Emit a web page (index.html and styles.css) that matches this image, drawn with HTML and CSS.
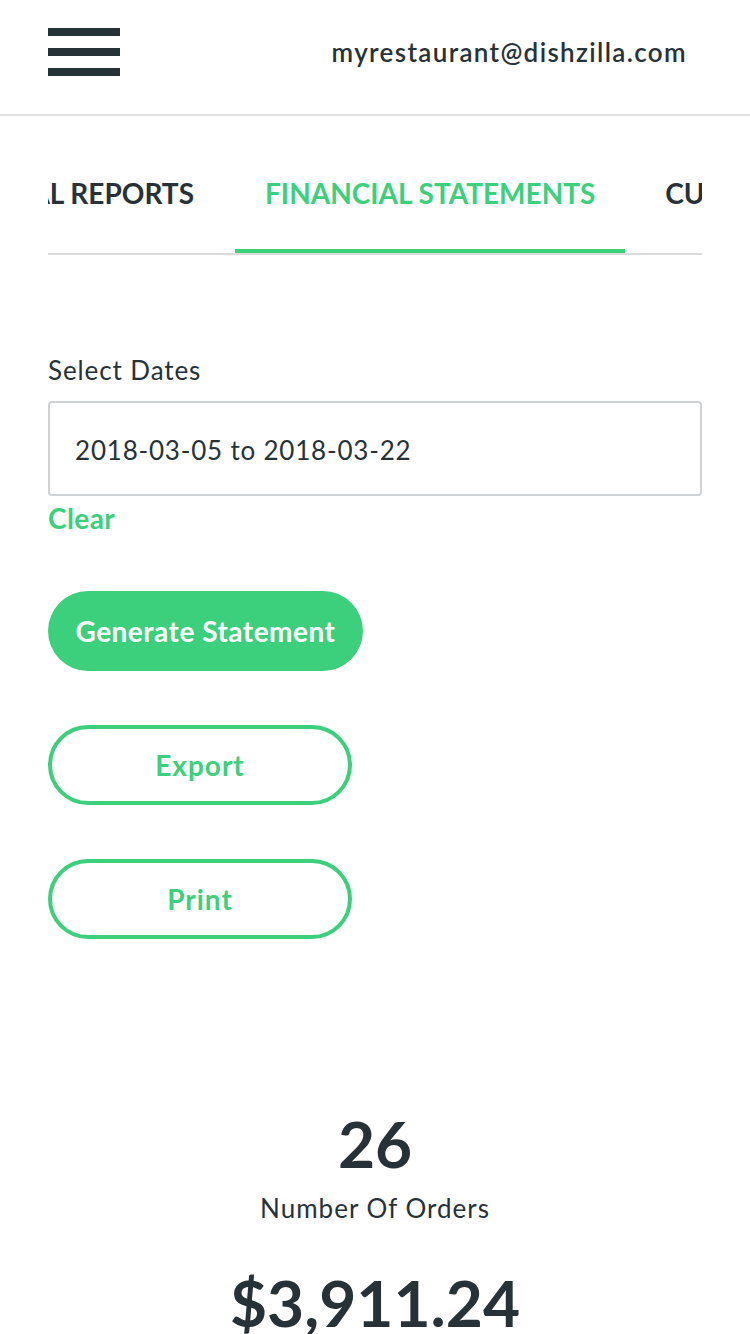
FILE: index.html
```html
<!DOCTYPE html>
<html lang="en">
<head>
<meta charset="utf-8">
<title>Financial Statements</title>
<link rel="stylesheet" href="styles.css">
</head>
<body>
<header class="topbar">
  <button class="menu-btn" aria-label="Menu">
    <span class="bar"></span><span class="bar"></span><span class="bar"></span>
  </button>
  <div class="account">myrestaurant@dishzilla.com</div>
</header>

<nav class="tabs">
  <div class="tab tab-first"><span class="tab-label">GENERAL REPORTS</span></div>
  <div class="tab tab-active"><span class="tab-label">FINANCIAL STATEMENTS</span></div>
  <div class="tab"><span class="tab-label">CUSTOMER REPORTS</span></div>
</nav>

<main class="content">
  <label class="field-label" for="dates">Select Dates</label>
  <input class="date-input" id="dates" type="text" value="2018-03-05 to 2018-03-22">
  <a class="clear-link" href="#">Clear</a>

  <div class="actions">
    <button class="btn btn-solid">Generate Statement</button>
    <button class="btn btn-outline">Export</button>
    <button class="btn btn-outline">Print</button>
  </div>

  <section class="stats">
    <div class="stat">
      <div class="stat-value">26</div>
      <div class="stat-label">Number Of Orders</div>
    </div>
    <div class="stat stat-money">
      <div class="stat-value">$3,911.24</div>
    </div>
  </section>
</main>
</body>
</html>
```

FILE: styles.css
```css
* { box-sizing: border-box; }

html, body {
  margin: 0;
  padding: 0;
  background: #ffffff;
}

body {
  font-family: Lato, "Open Sans", "Liberation Sans", sans-serif;
  color: #263238;
  width: 750px;
  overflow: hidden;
}

.topbar {
  height: 116px;
  border-bottom: 2px solid #e1e1e1;
  display: flex;
  align-items: flex-start;
  justify-content: space-between;
  padding: 28px 63px 0 48px;
}

.menu-btn {
  width: 72px;
  height: 48px;
  padding: 0;
  border: 0;
  background: transparent;
  display: flex;
  flex-direction: column;
  justify-content: space-between;
}

.menu-btn .bar {
  display: block;
  width: 72px;
  height: 8px;
  background: #263238;
}

.account {
  font-size: 26px;
  line-height: 48px;
  font-weight: 600;
  letter-spacing: 1.35px;
  color: #263238;
}

.tabs {
  margin: 0 48px;
  display: flex;
  gap: 10px;
  overflow: hidden;
  border-bottom: 2px solid #dcdcdc;
}

.tab {
  flex: 0 0 auto;
  display: flex;
  padding: 61px 30px 40px;
  border-bottom: 4px solid transparent;
  font-size: 28px;
  line-height: 32px;
  font-weight: 700;
  white-space: nowrap;
  color: #263238;
}

.tab-first {
  flex: 0 0 177px;
  justify-content: flex-end;
  padding-left: 0;
  padding-right: 31px;
  overflow: hidden;
}

.tab-active {
  color: #3ccf7c;
  border-bottom-color: #3ccf7c;
}

.content {
  padding: 101px 48px 0;
  display: flex;
  flex-direction: column;
  align-items: flex-start;
}

.field-label {
  font-size: 26px;
  line-height: 29px;
  letter-spacing: 0.9px;
  color: #263238;
}

.date-input {
  margin-top: 16px;
  width: 654px;
  height: 95px;
  border: 2px solid #cfd3d6;
  border-radius: 4px;
  padding: 2px 25px 0;
  font-family: Lato, "Open Sans", "Liberation Sans", sans-serif;
  font-size: 26px;
  letter-spacing: 0.8px;
  color: #263238;
  background: #ffffff;
  outline: none;
}

.clear-link {
  margin-top: 6px;
  font-size: 28px;
  line-height: 32px;
  font-weight: 700;
  letter-spacing: 0.4px;
  color: #3ccf7c;
  text-decoration: none;
}

.actions {
  margin-top: 57px;
  display: flex;
  flex-direction: column;
  align-items: flex-start;
  gap: 54px;
}

.btn {
  height: 80px;
  border-radius: 40px;
  font-family: Lato, "Open Sans", "Liberation Sans", sans-serif;
  font-size: 28px;
  font-weight: 700;
  letter-spacing: 0.5px;
  cursor: pointer;
}

.btn-solid {
  width: 315px;
  background: #3ccf7c;
  border: 0;
  color: #ffffff;
}

.btn-outline {
  width: 304px;
  background: #ffffff;
  border: 4px solid #3ccf7c;
  color: #3ccf7c;
  letter-spacing: 1px;
}

.stats {
  align-self: stretch;
  margin-top: 166px;
  display: flex;
  flex-direction: column;
  align-items: center;
  text-align: center;
}

.stat-value {
  font-size: 64px;
  line-height: 77px;
  font-weight: 700;
  color: #263238;
}

.stat-label {
  margin-top: 12px;
  font-size: 26px;
  line-height: 29px;
  letter-spacing: 1px;
  color: #263238;
}

.stat-money {
  margin-top: 41px;
}
```
